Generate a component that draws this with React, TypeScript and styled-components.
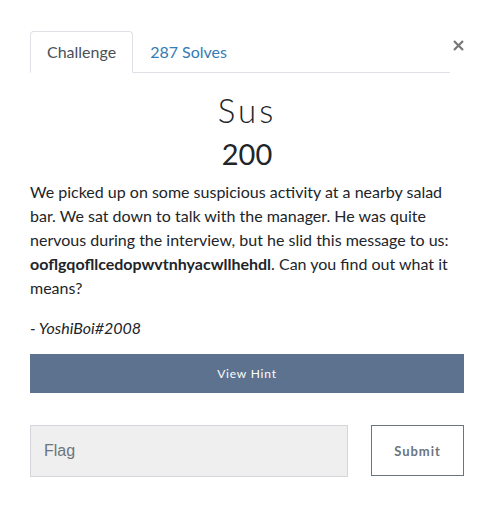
import React from "react";
import styled, { createGlobalStyle } from "styled-components";

const Global = createGlobalStyle`
  html, body { margin: 0; padding: 0; background: #fff; }
  body { font-family: Lato, "Open Sans", sans-serif; color: #212529; }
  * { box-sizing: border-box; }
`;

const Modal = styled.div`
  width: 491px;
  padding: 31px 27px 40px 30px;
  display: flex;
  flex-direction: column;
`;

const Header = styled.div`
  display: flex;
  align-items: flex-start;
`;

const Nav = styled.nav`
  flex: 1;
  display: flex;
  border-bottom: 1px solid #dee2e6;
`;

const Tab = styled.a<{ $active?: boolean }>`
  display: block;
  padding: 8px 16px;
  font-size: 16px;
  line-height: 24px;
  margin-bottom: -1px;
  border: 1px solid ${(p) => (p.$active ? "#dee2e6" : "transparent")};
  border-bottom-color: ${(p) => (p.$active ? "#fff" : "transparent")};
  border-radius: 4px 4px 0 0;
  color: ${(p) => (p.$active ? "#495057" : "#337ab7")};
  background: ${(p) => (p.$active ? "#fff" : "transparent")};
  text-decoration: none;
  cursor: pointer;
`;

const Close = styled.button`
  width: 14px;
  height: 14px;
  margin-top: 7px;
  padding: 0;
  border: 0;
  background: none;
  display: flex;
  align-items: center;
  justify-content: flex-end;
  cursor: pointer;
`;

const Title = styled.h3`
  margin: 17px 0 0;
  text-align: center;
  font-weight: 300;
  font-size: 33px;
  line-height: 40px;
  letter-spacing: 3px;
  color: #212529;
`;

const Value = styled.h4`
  margin: 6px 0 0;
  text-align: center;
  font-weight: 400;
  font-size: 29px;
  line-height: 36px;
  color: #212529;
`;

const Desc = styled.p`
  margin: 8px 0 0;
  font-size: 16px;
  line-height: 24px;
`;

const Author = styled.p`
  margin: 16px 0 0;
  font-size: 16px;
  line-height: 24px;
  font-style: italic;
`;

const HintButton = styled.button`
  margin-top: 14px;
  height: 39px;
  width: 100%;
  border: 0;
  background: #5c728f;
  color: #fff;
  font-family: Lato, sans-serif;
  font-size: 12px;
  letter-spacing: 0.8px;
  cursor: pointer;
`;

const SubmitRow = styled.form`
  margin-top: 32px;
  display: flex;
  gap: 23px;
`;

const FlagInput = styled.input`
  flex: 0 0 318px;
  height: 52px;
  padding: 0 13px;
  background: #efefef;
  border: 1px solid #d3d6db;
  font-family: "Liberation Sans", Arial, sans-serif;
  font-size: 16px;
  color: #495057;
  outline: none;
  &::placeholder { color: #6c757d; opacity: 1; }
`;

const SubmitButton = styled.button`
  flex: 1;
  height: 51px;
  background: #fff;
  border: 1px solid #6c757d;
  color: #6c757d;
  font-family: Lato, sans-serif;
  font-weight: 700;
  font-size: 13px;
  letter-spacing: 1px;
  cursor: pointer;
`;

export default function App() {
  return (
    <>
      <Global />
      <Modal>
        <Header>
          <Nav>
            <Tab $active>Challenge</Tab>
            <Tab>287 Solves</Tab>
          </Nav>
          <Close aria-label="Close">
            <svg width="11" height="11" viewBox="0 0 11 11">
              <path d="M1 1L10 10M10 1L1 10" stroke="#777" strokeWidth="2.2" strokeLinecap="butt" />
            </svg>
          </Close>
        </Header>
        <Title>Sus</Title>
        <Value>200</Value>
        <Desc>
          We picked up on some suspicious activity at a nearby salad bar. We sat down to talk with
          the manager. He was quite nervous during the interview, but he slid this message to us:{" "}
          <strong>ooflgqofllcedopwvtnhyacwllhehdl</strong>. Can you find out what it means?
        </Desc>
        <Author>- YoshiBoi#2008</Author>
        <HintButton type="button">View Hint</HintButton>
        <SubmitRow onSubmit={(e) => e.preventDefault()}>
          <FlagInput placeholder="Flag" />
          <SubmitButton type="submit">Submit</SubmitButton>
        </SubmitRow>
      </Modal>
    </>
  );
}
